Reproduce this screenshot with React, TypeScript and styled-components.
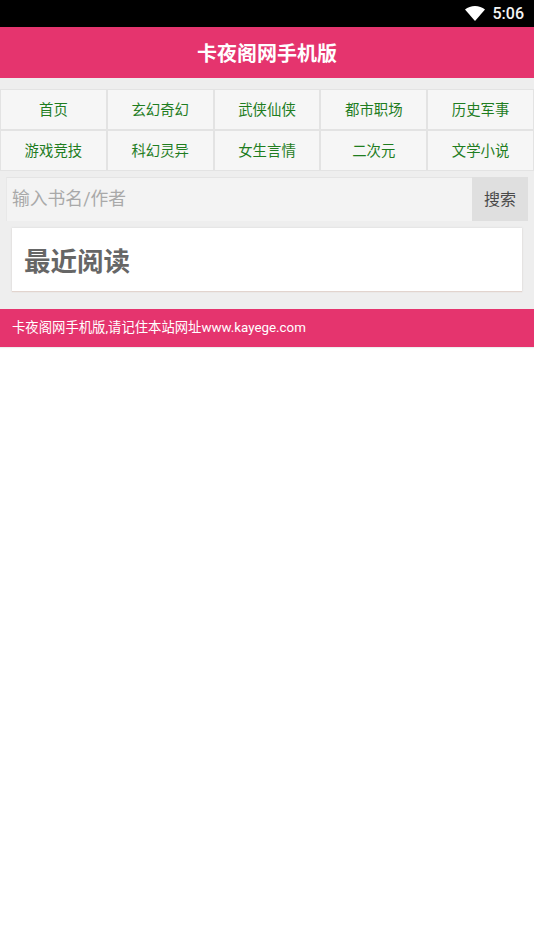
import * as React from 'react';
import styled, { createGlobalStyle } from 'styled-components';

const GlobalStyle = createGlobalStyle`
    html, body {
        margin: 0;
        padding: 0;
        background: #FFFFFF;
    }
    body {
        font-family: Roboto, "Noto Sans CJK SC", sans-serif;
    }
`

const Page = styled.div`
    width: 534px;
    height: 949px;
    overflow: hidden;
    background: #FFFFFF;
`

const StatusBar = styled.div`
    height: 27px;
    background: #000000;
    display: flex;
    align-items: center;
    justify-content: flex-end;
    padding-right: 10px;
    box-sizing: border-box;
    color: #F4F4F4;
    font-size: 16px;
    font-weight: 500;
`

const Wifi = styled.svg`
    width: 20px;
    height: 15px;
    margin-right: 8px;
`

const Header = styled.div`
    height: 51px;
    background: #E5346E;
    color: #FFFFFF;
    font-size: 20px;
    font-weight: bold;
    display: flex;
    align-items: center;
    justify-content: center;
`

const Main = styled.div`
    height: 231px;
    background: #EEEEEE;
    padding-top: 11px;
    box-sizing: border-box;
`

const NavGrid = styled.div`
    display: grid;
    grid-template-columns: repeat(5, 1fr);
    grid-auto-rows: 41px;
`

const NavItem = styled.a`
    background: #F6F6F6;
    color: #1F7D1F;
    font-size: 14.4px;
    padding-bottom: 2px;
    display: flex;
    align-items: center;
    justify-content: center;
    box-sizing: border-box;
    border: 1px solid #E3E3E3;
`

const SearchRow = styled.div`
    display: flex;
    height: 44px;
    margin: 6px 6px 0 6px;
`

const SearchInput = styled.div`
    flex: 1;
    background: #F3F3F3;
    color: #A9A9A9;
    font-size: 17.8px;
    padding: 0 0 5px 5px;
    display: flex;
    align-items: center;
    border-top: 1px solid #E4E4E4;
    border-left: 1px solid #E8E8E8;
    box-sizing: border-box;
`

const SearchButton = styled.div`
    width: 56px;
    background: #DFDFDF;
    color: #4A4A4A;
    font-size: 16px;
    padding-bottom: 3px;
    box-sizing: border-box;
    display: flex;
    align-items: center;
    justify-content: center;
`

const RecentCard = styled.div`
    height: 63px;
    margin: 7px 12px 0 12px;
    background: #FFFFFF;
    box-shadow: 0 1px 1px #E2D4CE, 0 0 2px #D6D6D6;
    display: flex;
    align-items: center;
    padding-left: 12px;
    box-sizing: border-box;
    color: #666666;
    font-size: 26.5px;
    font-weight: bold;
`

const Footer = styled.div`
    height: 38px;
    background: #E5346E;
    color: #FFFFFF;
    font-size: 13.35px;
    padding: 0 0 3px 12px;
    box-sizing: border-box;
    display: flex;
    align-items: center;
    box-shadow: 0 1px 1px #EEEEEE;
`

const navItems = [
    '首页', '玄幻奇幻', '武侠仙侠', '都市职场', '历史军事',
    '游戏竞技', '科幻灵异', '女生言情', '二次元', '文学小说',
]

export default function App() {
    return (
        <Page>
            <GlobalStyle />
            <StatusBar>
                <Wifi viewBox="0 0 20 15">
                    <path d="M0 3.5C2.8 1.2 6.2 0 10 0s7.200 1.200 10 3.500L10 15z" fill="#FFFFFF" />
                </Wifi>
                5:06
            </StatusBar>
            <Header>卡夜阁网手机版</Header>
            <Main>
                <NavGrid>
                    {navItems.map(name => (
                        <NavItem key={name}>{name}</NavItem>
                    ))}
                </NavGrid>
                <SearchRow>
                    <SearchInput>输入书名/作者</SearchInput>
                    <SearchButton>搜索</SearchButton>
                </SearchRow>
                <RecentCard>最近阅读</RecentCard>
            </Main>
            <Footer>卡夜阁网手机版,请记住本站网址www.kayege.com</Footer>
        </Page>
    )
}
